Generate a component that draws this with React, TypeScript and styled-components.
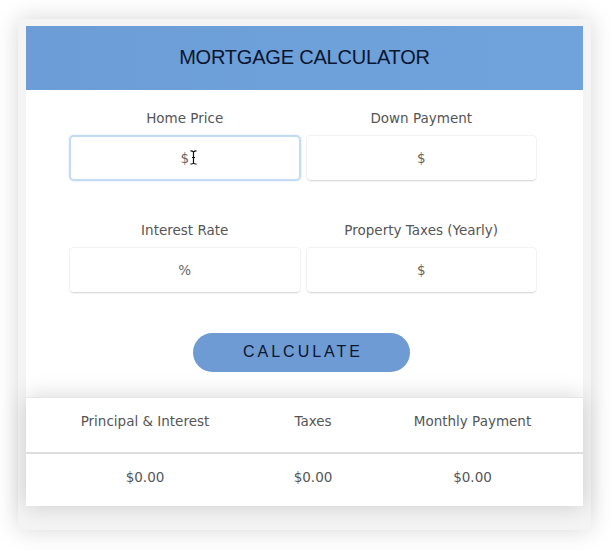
import { FC } from 'react'
import styled, { createGlobalStyle } from 'styled-components'

const GlobalStyle = createGlobalStyle`
  html, body {
    margin: 0;
    padding: 0;
    background: #ffffff;
  }
  body {
    font-family: 'DejaVu Sans', 'Liberation Sans', sans-serif;
  }
`

interface IField {
  label: string
  placeholder: string
  focused?: boolean
}

const fields: IField[] = [
  { label: 'Home Price', placeholder: '$', focused: true },
  { label: 'Down Payment', placeholder: '$' },
  { label: 'Interest Rate', placeholder: '%' },
  { label: 'Property Taxes (Yearly)', placeholder: '$' },
]

const results = [
  { title: 'Principal & Interest', value: '$0.00' },
  { title: 'Taxes', value: '$0.00' },
  { title: 'Monthly Payment', value: '$0.00' },
]

const TextCursor: FC = () => (
  <CursorSVG width="7" height="15" viewBox="0 0 7 15" aria-hidden="true">
    <path
      d="M0.5 0.8 C2 0.8 3 1.3 3.5 2 C4 1.3 5 0.8 6.5 0.8 M3.5 2 V13 M0.5 14.2 C2 14.2 3 13.7 3.5 13 C4 13.7 5 14.2 6.5 14.2 M2 7.5 H5"
      fill="none"
      stroke="#111"
      strokeWidth="1.2"
    />
  </CursorSVG>
)

const App: FC = () => {
  return (
    <Page>
      <GlobalStyle />
      <Panel>
        <Header>MORTGAGE CALCULATOR</Header>
        <Body>
          <FieldGrid>
            {fields.map((field) => (
              <Field key={field.label}>
                <Label>{field.label}</Label>
                <InputWrap>
                  <Input
                    type="text"
                    placeholder={field.placeholder}
                    $focused={field.focused}
                  />
                  {field.focused && <TextCursor />}
                </InputWrap>
              </Field>
            ))}
          </FieldGrid>
          <CalcButton type="button">CALCULATE</CalcButton>
        </Body>
        <Results>
          <ResultRow $pad={8}>
            {results.map((r) => (
              <ResultCell key={r.title}>{r.title}</ResultCell>
            ))}
          </ResultRow>
          <ResultRow $divider $pad={6}>
            {results.map((r) => (
              <ResultCell key={r.title}>{r.value}</ResultCell>
            ))}
          </ResultRow>
        </Results>
      </Panel>
    </Page>
  )
}

export default App

const Page = styled.div`
  padding: 19px 20px 21px 18px;
`
const Panel = styled.div`
  width: 557px;
  padding: 7px 8px 24px;
  background: #f4f4f4;
  box-shadow: 0 0 22px rgba(0, 0, 0, 0.16);
`
const Header = styled.div`
  height: 64px;
  padding-bottom: 2px;
  box-sizing: border-box;
  display: flex;
  align-items: center;
  justify-content: center;
  background: linear-gradient(90deg, #6c9dd6 0%, #70a3dc 100%);
  color: #0b1630;
  font-family: 'Liberation Sans', Arial, sans-serif;
  font-size: 20px;
  letter-spacing: -0.2px;
`
const Body = styled.div`
  background: #ffffff;
  display: flex;
  flex-direction: column;
  align-items: center;
  padding: 18px 0 25px;
`
const FieldGrid = styled.div`
  width: 468px;
  margin-right: 3px;
  display: grid;
  grid-template-columns: 1fr 1fr;
  column-gap: 5px;
  row-gap: 39px;
`
const Field = styled.div`
  display: flex;
  flex-direction: column;
  align-items: stretch;
`
const Label = styled.div`
  text-align: center;
  font-size: 13.5px;
  line-height: 20px;
  color: #555555;
  margin-bottom: 7px;
`
const InputWrap = styled.div`
  position: relative;
`
const Input = styled.input<{ $focused?: boolean }>`
  box-sizing: border-box;
  width: 100%;
  height: 46px;
  border: ${(p) => (p.$focused ? '2px solid #c4dbf6' : '1px solid #f2f2f2')};
  border-bottom-color: ${(p) => (p.$focused ? '#c4dbf6' : '#dcdcdc')};
  border-radius: 5px;
  box-shadow: ${(p) =>
    p.$focused ? '0 0 2px rgba(120, 170, 230, 0.35)' : '0 1px 1px rgba(0, 0, 0, 0.05)'};
  outline: none;
  background: #ffffff;
  text-align: center;
  font-family: 'DejaVu Sans', sans-serif;
  font-size: 13.5px;
  &::placeholder {
    color: #666666;
  }
`
const CursorSVG = styled.svg`
  position: absolute;
  left: 121px;
  top: 15px;
`
const CalcButton = styled.button`
  margin: 40px 6px 0 0;
  width: 217px;
  height: 39px;
  border: none;
  border-radius: 20px;
  background: #6e9bd3;
  color: #0b1630;
  font-family: 'Liberation Sans', Arial, sans-serif;
  font-size: 16px;
  letter-spacing: 3px;
  padding: 0 0 2px 3px;
  cursor: pointer;
`
const Results = styled.div`
  position: relative;
  background: #ffffff;
  box-shadow: 0 0 22px rgba(0, 0, 0, 0.17);
`
const ResultRow = styled.div<{ $divider?: boolean; $pad: number }>`
  display: grid;
  grid-template-columns: 238px 98px 1fr;
  box-sizing: border-box;
  height: ${(p) => (p.$divider ? '54px' : '55px')};
  padding-bottom: ${(p) => p.$pad}px;
  border-top: ${(p) => (p.$divider ? '2px solid #dedede' : '1px solid #e6e6e6')};
`
const ResultCell = styled.div`
  display: flex;
  align-items: center;
  justify-content: center;
  font-size: 13.5px;
  color: #555555;
`
